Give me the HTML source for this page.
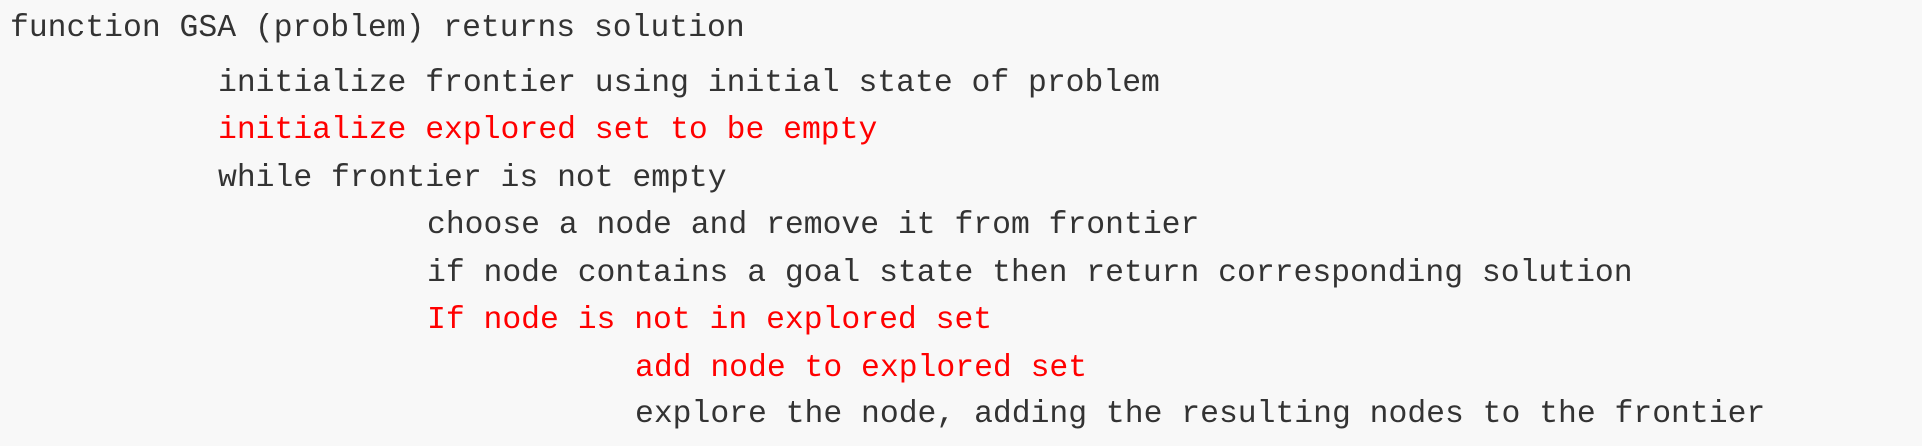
<!DOCTYPE html>
<html><head><style>
html,body{margin:0;padding:0;}
body{width:1922px;height:446px;background:#f8f8f8;overflow:hidden;position:relative;}
.l{position:absolute;font-family:"Liberation Mono",monospace;font-size:31.4px;line-height:40px;color:#333;white-space:pre;}
.r{color:#f00;}
</style></head><body>
<div class="l" style="left:10px;top:9px">function GSA (problem) returns solution</div>
<div class="l" style="left:218px;top:64px">initialize frontier using initial state of problem</div>
<div class="l r" style="left:218px;top:111px">initialize explored set to be empty</div>
<div class="l" style="left:218px;top:159px">while frontier is not empty</div>
<div class="l" style="left:427px;top:206px">choose a node and remove it from frontier</div>
<div class="l" style="left:427px;top:254px">if node contains a goal state then return corresponding solution</div>
<div class="l r" style="left:427px;top:301px">If node is not in explored set</div>
<div class="l r" style="left:635px;top:349px">add node to explored set</div>
<div class="l" style="left:635px;top:395px">explore the node, adding the resulting nodes to the frontier</div>
</body></html>
